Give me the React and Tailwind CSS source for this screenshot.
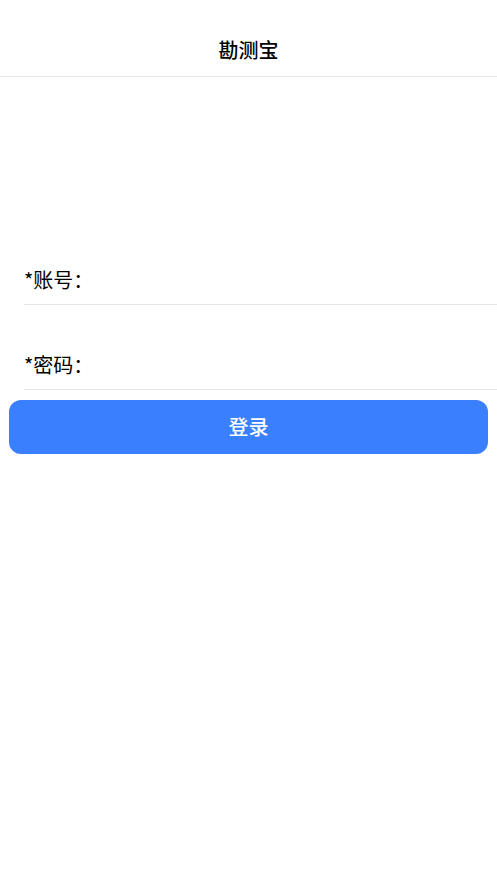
export default function App() {
  return (
    <div className="min-h-screen bg-white" style={{ fontFamily: '"Noto Sans CJK SC", "Noto Sans", sans-serif' }}>
      {/* Header */}
      <div className="h-[77px] flex items-end justify-center pb-[12px] border-b border-[#e8e8e8]">
        <h1 className="text-[20px] leading-[28px] font-medium text-black">勘测宝</h1>
      </div>

      <div className="pt-[173px]">
        <div className="ml-[24px] h-[55px] flex items-end pb-[10px] border-b border-[#e5e5e5]">
          <span className="text-[20px] leading-[28px] text-black">*账号：</span>
        </div>
        <div className="ml-[24px] mt-[29px] h-[56px] flex items-end pb-[10px] border-b border-[#e5e5e5]">
          <span className="text-[20px] leading-[28px] text-black">*密码：</span>
        </div>
        <div className="px-[9px] mt-[10px]">
          <button className="w-full h-[54px] rounded-[12px] bg-[#3a80fe] text-white text-[20px] font-medium">
            登录
          </button>
        </div>
      </div>
    </div>
  );
}
